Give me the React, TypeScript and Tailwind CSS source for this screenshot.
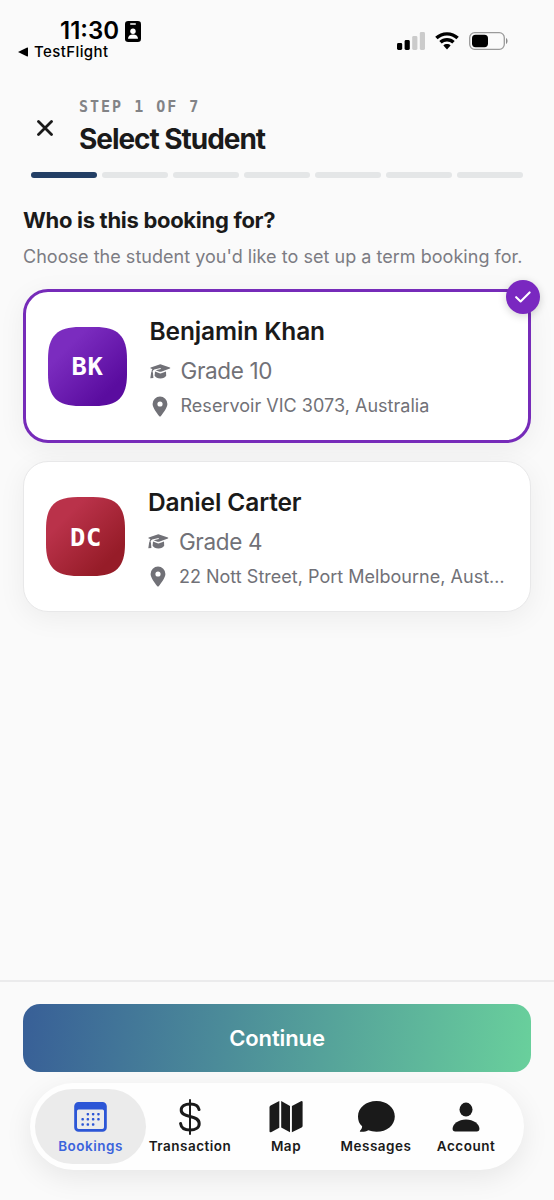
import React from "react";
import clsx from "clsx";

interface Student {
  name: string;
  initials: string;
  grade: string;
  address: string;
  from: string;
  to: string;
  selected?: boolean;
}

const STUDENTS: Student[] = [
  {
    name: "Benjamin Khan",
    initials: "BK",
    grade: "Grade 10",
    address: "Reservoir VIC 3073, Australia",
    from: "#7b2cbf",
    to: "#5a0c9f",
    selected: true,
  },
  {
    name: "Daniel Carter",
    initials: "DC",
    grade: "Grade 4",
    address: "22 Nott Street, Port Melbourne, Australia",
    from: "#ba324a",
    to: "#961c28",
  },
];

const TOTAL_STEPS = 7;
const CURRENT_STEP = 1;

const StatusBar = () => (
  <div className="flex h-[82px] justify-between pl-[18px] pr-[45px] text-black">
    <div className="pt-[21px]">
      <div className="flex h-5 items-center pl-[42px]">
        <span className="w-[65px] whitespace-nowrap text-[24px] font-semibold leading-5 tracking-[0px]">
          11:30
        </span>
        <svg width="16" height="21" viewBox="0 0 16 21">
          <rect width="16" height="21" rx="3.2" fill="#000" />
          <rect x="5" y="2.2" width="6" height="1.6" rx="0.8" fill="#fff" />
          <circle cx="8" cy="10.3" r="2.7" fill="#fff" />
          <path d="M3 17.8c0-3 2-4.4 5-4.4s5 1.400 5 4.400z" fill="#fff" />
        </svg>
      </div>
      <div className="mt-[3px] flex h-4 items-center gap-1.5">
        <svg width="10" height="10" viewBox="0 0 10 10">
          <path d="M0 5 9.2 0.6Q10 0.3 10 1v8q0 .7-.8.4z" />
        </svg>
        <span className="text-[15px] font-medium leading-4 tracking-[0.4px]">TestFlight</span>
      </div>
    </div>

    <div className="flex h-[18px] gap-[10px] pt-8">
      <svg width="28" height="18" viewBox="0 0 28 18" className="shrink-0">
        <rect x="0" y="11" width="5.2" height="7" rx="1.4" />
        <rect x="7.6" y="8" width="5.2" height="10" rx="1.4" />
        <rect x="15.2" y="4" width="5.2" height="14" rx="1.4" fill="#cbcbcb" />
        <rect x="22.8" y="0" width="5.2" height="18" rx="1.4" fill="#cbcbcb" />
      </svg>
      <svg width="24" height="18" viewBox="0 0 24 18" className="shrink-0">
        <path d="M12 0.2c4.600 0 8.800 1.700 11.800 4.600L21.400 7.300A13.500 13.500 0 0 0 2.600 7.300L0.200 4.800C3.200 1.900 7.400 .2 12 .2z" />
        <path d="M12 6.100c3 0 5.700 1.100 7.700 3L17.300 11.500a7.700 7.700 0 0 0-10.600 0L4.300 9.100c2-1.900 4.700-3 7.700-3z" />
        <path d="M12 12.100c1.400 0 2.700.5 3.600 1.400L12 17.500l-3.600-4c.9-.9 2.200-1.400 3.600-1.400z" />
      </svg>
      <svg width="40" height="18" viewBox="0 0 40 18" className="shrink-0">
        <rect x="0.7" y="0.7" width="34.6" height="16.6" rx="5" fill="none" stroke="#9a9a9a" strokeWidth="1.3" />
        <rect x="3" y="2.8" width="16" height="12.4" rx="3.6" />
        <path d="M37 6v6c2-.8 2-5.200 0-6z" fill="#8a8a8a" />
      </svg>
    </div>
  </div>
);

const StepHeader = () => (
  <header className="px-[31px]">
    <div className="flex h-[90px]">
      <button aria-label="Close" className="mt-[31px] ml-[6px] flex h-[30px] w-[42px] items-center">
        <svg width="16" height="16" viewBox="0 0 16 16" fill="none" stroke="#1a1a1a" strokeWidth="2.8" strokeLinecap="round">
          <path d="M1.500 1.500l13 13M14.500 1.500l-13 13" />
        </svg>
      </button>
      <div className="whitespace-nowrap pt-4">
        <p className="font-['DejaVu_Sans_Mono',monospace] text-[15px] font-bold leading-[18px] tracking-[2px] text-[#828386]">
          STEP {CURRENT_STEP} OF {TOTAL_STEPS}
        </p>
        <h1 className="mt-[5px] text-[28px] font-bold leading-[36px] tracking-[-1.05px]">Select Student</h1>
      </div>
    </div>
    <div className="flex h-[6px] gap-[5.5px]">
      {Array.from({ length: TOTAL_STEPS }, (_, i) => (
        <div
          key={i}
          className={clsx("h-[6px] flex-1 rounded-full", i < CURRENT_STEP ? "bg-[#233f65]" : "bg-[#e4e6e7]")}
        />
      ))}
    </div>
  </header>
);

// Superellipse avatar with the initials stacked over it
const Avatar = ({ id, student }: { id: string; student: Student }) => (
  <div className="grid h-[79px] w-[79px] shrink-0 place-items-center">
    <svg width="79" height="79" viewBox="0 0 79 79" className="col-start-1 row-start-1">
      <defs>
        <linearGradient id={id} x1="0" y1="0" x2="1" y2="1">
          <stop offset="0.25" stopColor={student.from} />
          <stop offset="0.8" stopColor={student.to} />
        </linearGradient>
      </defs>
      <path
        d="M0 32C0 9 9 0 32 0H47C70 0 79 9 79 32V47C79 70 70 79 47 79H32C9 79 0 70 0 47z"
        fill={`url(#${id})`}
      />
    </svg>
    <span className="z-10 col-start-1 row-start-1 font-['DejaVu_Sans_Mono',monospace] text-[25.5px] font-bold leading-[30px] tracking-[0.6px] text-white">
      {student.initials}
    </span>
  </div>
);

const StudentCard = ({ student, id }: { student: Student; id: string }) => (
  <div
    className={clsx(
      "relative flex items-center rounded-[25px] bg-white shadow-[0_6px_28px_rgba(0,0,0,0.06)]",
      student.selected
        ? "h-[154px] border-[3px] border-[#762bb9] px-[22px]"
        : "h-[151px] border border-[#e8e8e9] px-[22.4px]"
    )}
  >
    <Avatar id={id} student={student} />
    <div className="ml-[22.5px] min-w-0 flex-1 pt-1">
      <h3 className="truncate text-[24.5px] font-semibold leading-[31px] tracking-[-0.12px]">{student.name}</h3>
      <div className="mt-[9px] flex h-[30px] items-center text-[#717177]">
        <svg width="21" height="15" viewBox="0 0 21 15" fill="currentColor" className="mr-[10px] shrink-0">
          <path d="M9.500.5q.8-.3 1.600 0l8.800 3q1 .5 0 1l-8.800 3.200q-.8.3-1.600 0L5.600 6.300l5.200-1.400-.2-.8L4.200 5.600Q2.700 6.200 2.500 8q.8.600.5 1.500l.4 4.400-3.100.3.700-4.700q-.2-1 .5-1.500 0-1.900.9-3.100L.7 4.400q-.7-.4 0-.8z" />
          <path d="M5 7.600 9.500 9.300q.9.300 1.800 0L16 7.600l.2 4.100c-.8 1.500-3.100 2.700-5.800 2.700s-5-1.200-5.800-2.700z" />
        </svg>
        <span className="text-[22.5px] leading-[30px] tracking-[-0.35px]">{student.grade}</span>
      </div>
      <div className="mt-1.5 flex h-7 items-center text-[#717177]">
        <svg width="16" height="21" viewBox="0 0 16 21" fill="currentColor" className="ml-[2px] mr-[13px] shrink-0">
          <path
            fillRule="evenodd"
            d="M8 .5a7.400 7.400 0 0 1 7.400 7.400c0 3.500-4.500 9.500-6.500 12a1.100 1.100 0 0 1-1.800 0C5.100 17.400.6 11.400.6 7.900A7.400 7.400 0 0 1 8 .5zm0 4.900a2.600 2.600 0 1 0 0 5.200 2.600 2.600 0 0 0 0-5.200z"
          />
        </svg>
        <span className="truncate text-[18px] leading-7 tracking-[0.02px]">{student.address}</span>
      </div>
    </div>

    {student.selected && (
      <div className="absolute -right-[12px] -top-[12px] flex h-[34px] w-[34px] items-center justify-center rounded-full bg-[#7a28c0] shadow-[0_2px_8px_rgba(0,0,0,0.18)]">
        <svg width="16" height="12" viewBox="0 0 16 12" fill="none" stroke="#fff" strokeWidth="2.1" strokeLinecap="round" strokeLinejoin="round">
          <path d="M1.200 6.200 5.600 10.400 14.600 1.400" />
        </svg>
      </div>
    )}
  </div>
);

const CalendarIcon = () => (
  <svg width="33" height="30" viewBox="0 0 33 30" fill="#2c56d6">
    <path
      fillRule="evenodd"
      d="M4.500 0h24A4.300 4.300 0 0 1 32.800 4.300v21.200a4.300 4.300 0 0 1-4.300 4.300h-24A4.300 4.300 0 0 1 .2 25.500V4.300A4.300 4.300 0 0 1 4.500 0zM4.500 7.500A1.600 1.600 0 0 0 3 9v16.200a1.700 1.700 0 0 0 1.700 1.700h23.600A1.700 1.700 0 0 0 30 25.200V9a1.600 1.600 0 0 0-1.500-1.500z"
    />
    {[
      [12.6, 10.9], [17.9, 10.9], [23.2, 10.9],
      [7.4, 16.1], [12.6, 16.1], [17.9, 16.1], [23.2, 16.1],
      [7.4, 21.3], [12.6, 21.3], [17.9, 21.3],
    ].map(([x, y]) => (
      <rect key={`${x}-${y}`} x={x} y={y} width="2.5" height="2.5" rx="0.8" />
    ))}
  </svg>
);

const DollarIcon = () => (
  <svg width="22" height="36" viewBox="0 0 22 36" fill="none" stroke="#1a1a1a" strokeLinecap="round">
    <path d="M11 1v34" strokeWidth="2" />
    <path
      strokeWidth="3"
      d="M20 10.500C19.400 7 16 5 11.200 5 6 5 2.200 7.300 2.200 11c0 4 3.700 5.300 8.800 6.500 5.300 1.200 9.200 2.600 9.200 7.200 0 4-3.700 6.300-9 6.300-5.700 0-9.100-2.200-9.600-6.400"
    />
  </svg>
);

const MapIcon = () => (
  <svg width="34" height="33" viewBox="0 0 34 33" fill="#1a1a1a">
    <path d="M10.300 1v26.800L2 32.200Q.5 32.800.5 31.200V7.500q0-1.200 1.100-1.900z" />
    <path d="M12.200 1 21 6V32.300L12.200 27.400z" />
    <path d="M22.900 32.300V6L32 1.200q1.600-.7 1.600.9v23.700q0 1-1 1.600z" />
  </svg>
);

const ChatIcon = () => (
  <svg width="38" height="34" viewBox="0 0 38 34" fill="#1a1a1a">
    <path d="M19.500 1c10.400 0 18.300 6.600 18.300 15.400S29.900 31.700 19.500 31.700c-3 0-5.800-.5-8.200-1.400-2.400 1.400-4.900 1.700-7.600 1.500-.9-.1-1.100-.8-.5-1.400 1.300-1.200 2-2.500 1.900-4.100C2.200 23.700 1 20.300 1 16.400 1 7.600 9.100 1 19.500 1z" />
  </svg>
);

const PersonIcon = () => (
  <svg width="28" height="30" viewBox="0 0 28 30" fill="#1a1a1a">
    <ellipse cx="14" cy="7.6" rx="6.5" ry="7" />
    <path d="M14 17.400c7.500 0 13.400 4.300 13.400 9.400 0 1.700-.8 2.600-2.600 2.600H3.200c-1.800 0-2.600-.9-2.600-2.600 0-5.100 5.900-9.400 13.400-9.400z" />
  </svg>
);

const TABS = [
  { label: "Bookings", icon: <CalendarIcon />, width: "w-[111px]", active: true },
  { label: "Transaction", icon: <DollarIcon />, width: "w-[88px]" },
  { label: "Map", icon: <MapIcon />, width: "w-[104px]" },
  { label: "Messages", icon: <ChatIcon />, width: "w-[76px]" },
  { label: "Account", icon: <PersonIcon />, width: "w-[104px]" },
];

const TabBar = () => (
  <nav className="mx-[30px] mt-[11px] flex h-[87px] rounded-full bg-[#fefefe] px-[5px] py-[6px] shadow-[0_8px_28px_rgba(0,0,0,0.08)]">
    {TABS.map((tab) => (
      <div
        key={tab.label}
        className={clsx(
          "flex h-[75px] shrink-0 flex-col items-center rounded-full",
          tab.width,
          tab.active ? "bg-[#ebebeb] text-[#3b63dc]" : "text-[#1a1a1a]"
        )}
      >
        <div className="flex h-[48px] items-center justify-center pt-[7px]">{tab.icon}</div>
        <span className="whitespace-nowrap text-[13.5px] font-semibold leading-[18px] tracking-[0.5px]">
          {tab.label}
        </span>
      </div>
    ))}
  </nav>
);

export default function App() {
  return (
    <div className="flex h-[1200px] w-[554px] flex-col overflow-hidden bg-[#fafafa] font-['Inter',sans-serif] text-[#1a1a1a]">
      <StatusBar />
      <StepHeader />

      <main className="flex-1 px-[23px] pt-[27px]">
        <h2 className="whitespace-nowrap text-[22px] font-bold leading-[30px] tracking-[-0.3px]">
          Who is this booking for?
        </h2>
        <p className="mt-[9px] whitespace-nowrap text-[18px] leading-[26px] tracking-[0.03px] text-[#7c7c83]">
          Choose the student you'd like to set up a term booking for.
        </p>
        <div className="mt-[19px] flex flex-col gap-[18px]">
          {STUDENTS.map((student, i) => (
            <StudentCard key={student.name} student={student} id={`avatar-${i}`} />
          ))}
        </div>
      </main>

      <footer className="h-[220px] border-t-2 border-[#ebebec] pt-[22px]">
        <div className="px-[23px]">
          <button className="h-[68px] w-full rounded-[17px] bg-linear-[97deg] from-[#385f97] to-[#69d09c] text-[22px] font-semibold tracking-[-0.1px] text-white">
            Continue
          </button>
        </div>
        <TabBar />
      </footer>
    </div>
  );
}
